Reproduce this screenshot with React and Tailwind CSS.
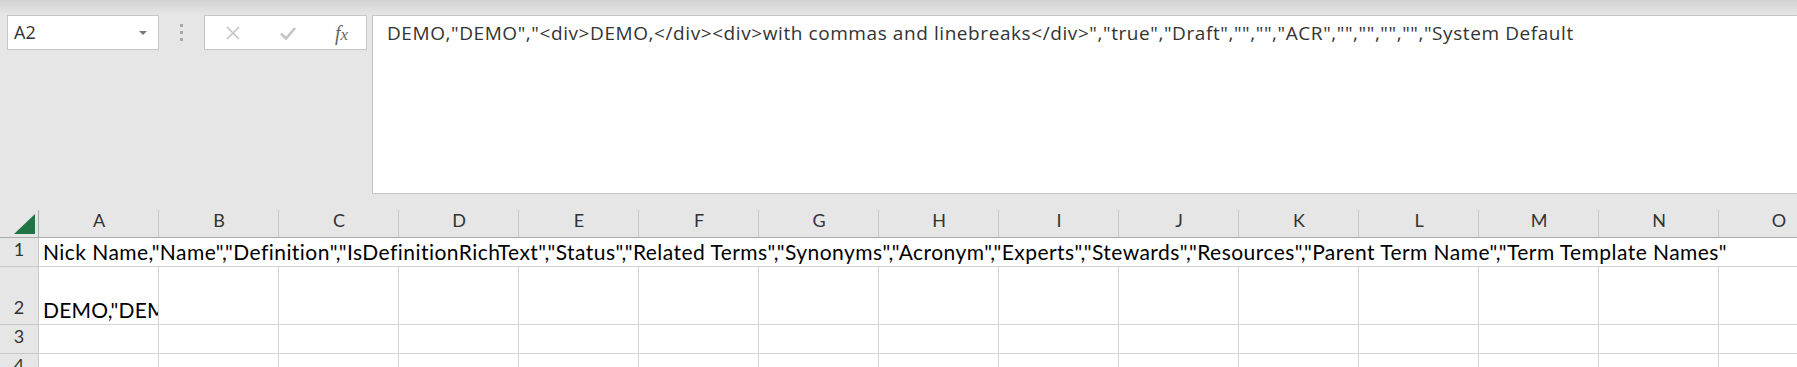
const COLS = ["A", "B", "C", "D", "E", "F", "G", "H", "I", "J", "K", "L", "M", "N", "O"];

const HEADER_ROW =
  'Nick Name,"Name","Definition","IsDefinitionRichText","Status","Related Terms","Synonyms","Acronym","Experts","Stewards","Resources","Parent Term Name","Term Template Names"';

const FORMULA =
  'DEMO,"DEMO","<div>DEMO,</div><div>with commas and linebreaks</div>","true","Draft","","","ACR","","","","","System Default';

const RowHead = ({ n, h }) => (
  <div
    className={`flex items-end justify-center pb-[3px] bg-[#e6e6e6] border-r border-b border-[#c8c8c8] text-[18px] text-[#333] ${h}`}
  >
    {n}
  </div>
);

const EmptyCells = ({ h, skip = 0 }) =>
  COLS.slice(skip).map((c) => (
    <div key={c} className={`border-r border-b border-[#d4d4d4] bg-white ${h}`} />
  ));

const App = () => {
  return (
    <div
      className="w-[1797px] h-[367px] overflow-hidden bg-[#e6e6e6]"
      style={{ fontFamily: "Lato, sans-serif" }}
    >
      {/* top shade */}
      <div className="h-[15px] bg-gradient-to-b from-[#d2d2d2] to-[#e6e6e6]" />

      {/* name box + formula bar */}
      <div className="flex h-[179px]" style={{ fontFamily: '"Open Sans", sans-serif' }}>
        <div className="ml-[7px] w-[152px] h-[35px] bg-white border border-[#c6c6c6] flex items-center justify-between pl-[6px] pr-[11px]">
          <span className="text-[18px] text-[#333]">A2</span>
          <span className="w-0 h-0 border-l-[4px] border-r-[4px] border-t-[4px] border-l-transparent border-r-transparent border-t-[#777]" />
        </div>

        <div className="w-[45px] h-[35px] flex flex-col items-center justify-center gap-[4px]">
          <span className="w-[3px] h-[3px] bg-[#a8a8a8]" />
          <span className="w-[3px] h-[3px] bg-[#a8a8a8]" />
          <span className="w-[3px] h-[3px] bg-[#a8a8a8]" />
        </div>

        <div className="w-[163px] h-[35px] bg-white border border-[#c6c6c6] flex items-center justify-between pl-[20px] pr-[18px]">
          <svg width="16" height="16" viewBox="0 0 16 16">
            <path d="M2 2 L14 14 M14 2 L2 14" stroke="#c4c4c4" strokeWidth="1.6" fill="none" />
          </svg>
          <svg width="18" height="16" viewBox="0 0 18 16">
            <path d="M2 8.5 L7 13.5 L16 3" stroke="#c4c4c4" strokeWidth="2.6" fill="none" />
          </svg>
          <span
            className="text-[20px] italic text-[#666] leading-none"
            style={{ fontFamily: '"Liberation Serif", serif' }}
          >
            f<span className="text-[17px]">x</span>
          </span>
        </div>

        <div className="ml-[5px] flex-1 h-full bg-white border-l border-t border-b border-[#c6c6c6] pl-[14px] pt-[3px]">
          <div className="text-[19px] tracking-[0.58px] text-[#333] whitespace-nowrap">{FORMULA}</div>
        </div>
      </div>

      {/* sheet */}
      <div className="mt-[16px] grid grid-cols-[39px_repeat(15,120px)]">
        {/* column header */}
        <div className="h-[28px] bg-[#e6e6e6] border-r border-b border-[#ababab] flex items-end justify-end pr-[3px] pb-[3px]">
          <svg width="21" height="20" viewBox="0 0 21 20">
            <polygon points="21,0 21,20 0,20" fill="#217346" />
          </svg>
        </div>
        {COLS.map((c) => (
          <div
            key={c}
            className="h-[28px] bg-[#e6e6e6] border-b border-b-[#ababab] flex items-end justify-center pb-[3px] text-[18px] text-[#333] relative"
          >
            <span className="absolute right-0 top-0 bottom-0 w-px bg-[#c6c6c6]" />
            {c}
          </div>
        ))}

        {/* row 1 */}
        <RowHead n="1" h="h-[29px]" />
        <div className="col-span-15 h-[29px] bg-white border-b border-[#d4d4d4] pl-[4px] flex items-end pb-[1px] text-[21px] tracking-[0.45px] leading-[26px] text-black whitespace-nowrap overflow-hidden">
          {HEADER_ROW}
        </div>

        {/* row 2 */}
        <RowHead n="2" h="h-[58px]" />
        <div className="h-[58px] bg-white border-r border-b border-[#d4d4d4] pl-[4px] flex items-end pb-[1px] text-[21px] tracking-[0.2px] leading-[26px] text-black whitespace-nowrap overflow-hidden">
          DEMO,"DEMO","&lt;div&gt;DEMO,
        </div>
        <EmptyCells h="h-[58px]" skip={1} />

        {/* row 3 */}
        <RowHead n="3" h="h-[29px]" />
        <EmptyCells h="h-[29px]" />

        {/* row 4 */}
        <RowHead n="4" h="h-[29px]" />
        <EmptyCells h="h-[29px]" />
      </div>
    </div>
  );
};

export default App;
